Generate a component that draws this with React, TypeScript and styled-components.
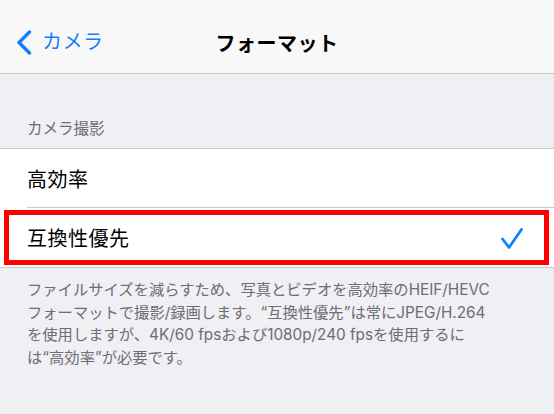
import React from 'react';
import styled, { createGlobalStyle } from 'styled-components';

const GlobalStyle = createGlobalStyle`
  html, body {
    margin: 0;
    padding: 0;
    background: #efeff4;
    font-family: Inter, "Noto Sans CJK JP", sans-serif;
    -webkit-font-smoothing: antialiased;
  }
`;

const BLUE = '#157efb';

type Option = {
  id: string;
  label: string;
};

const options: Option[] = [
  { id: 'efficient', label: '高効率' },
  { id: 'compatible', label: '互換性優先' },
];

const App: React.FC = () => {
  const [selected, setSelected] = React.useState<string>('compatible');

  return (
    <Page>
      <GlobalStyle />
      <NavBar>
        <BackButton>
          <svg width="17" height="25" viewBox="0 0 17 25">
            <path
              d="M13.5 2 L3 12.5 L13.5 23"
              fill="none"
              stroke={BLUE}
              strokeWidth="3.4"
              strokeLinecap="round"
              strokeLinejoin="round"
            />
          </svg>
          <span>カメラ</span>
        </BackButton>
        <Title>フォーマット</Title>
        <div />
      </NavBar>

      <SectionHeader>カメラ撮影</SectionHeader>

      <Group>
        {options.map((opt, i) => (
          <Row
            key={opt.id}
            $last={i === options.length - 1}
            onClick={() => setSelected(opt.id)}>
            <RowLabel>{opt.label}</RowLabel>
            {selected === opt.id && (
              <svg width="22" height="22" viewBox="0 0 22 22">
                <path
                  d="M1.5 11 L8 19.5 L20.5 1.5"
                  fill="none"
                  stroke={BLUE}
                  strokeWidth="2.8"
                  strokeLinecap="round"
                  strokeLinejoin="round"
                />
              </svg>
            )}
            {opt.id === 'compatible' && <Highlight />}
          </Row>
        ))}
      </Group>

      <Footer>
        ファイルサイズを減らすため、写真とビデオを高効率のHEIF/HEVC
        <br />
        フォーマットで撮影/録画します。“互換性優先”は常にJPEG/H.264
        <br />
        を使用しますが、4K/60 fpsおよび1080p/240 fpsを使用するに
        <br />
        は“高効率”が必要です。
      </Footer>
    </Page>
  );
};

const Page = styled.div`
  width: 554px;
  min-height: 414px;
  background: #efeff4;
`;

const NavBar = styled.header`
  height: 62px;
  padding-top: 11px;
  background: #f8f8f8;
  border-bottom: 1px solid #c8c7cc;
  display: grid;
  grid-template-columns: 1fr auto 1fr;
  align-items: center;
`;

const BackButton = styled.div`
  display: flex;
  align-items: center;
  gap: 9px;
  padding-left: 16px;
  color: ${BLUE};
  font-size: 20px;
  letter-spacing: 0.5px;
  span {
    line-height: 1;
  }
`;

const Title = styled.h1`
  margin: 0;
  font-size: 20px;
  font-weight: 700;
  letter-spacing: 0.5px;
  color: #000;
`;

const SectionHeader = styled.div`
  height: 74px;
  box-sizing: border-box;
  display: flex;
  align-items: flex-end;
  padding: 0 0 9px 27px;
  font-size: 15.5px;
  line-height: 20px;
  color: #6d6d72;
`;

const Group = styled.div`
  background: #fff;
  border-top: 1px solid #c8c7cc;
  border-bottom: 1px solid #c8c7cc;
`;

const Row = styled.div<{ $last?: boolean }>`
  position: relative;
  height: 59px;
  box-sizing: border-box;
  display: flex;
  align-items: center;
  justify-content: space-between;
  padding: 0 31px 0 27px;
  cursor: pointer;
  svg {
    margin-top: 2px;
  }
  &::after {
    content: '';
    display: ${(p) => (p.$last ? 'none' : 'block')};
    position: absolute;
    left: 27px;
    right: 0;
    bottom: 0;
    height: 1px;
    background: #c8c7cc;
  }
`;

const RowLabel = styled.span`
  font-size: 20px;
  letter-spacing: 0.5px;
  color: #000;
`;

const Highlight = styled.div`
  position: absolute;
  left: 4px;
  right: 5px;
  top: 2px;
  bottom: 2px;
  border: 5px solid #ff0000;
  pointer-events: none;
`;

const Footer = styled.p`
  margin: 0;
  padding: 11px 20px 0 27px;
  font-size: 15.3px;
  line-height: 22.5px;
  color: #6d6d72;
`;

export default App;
